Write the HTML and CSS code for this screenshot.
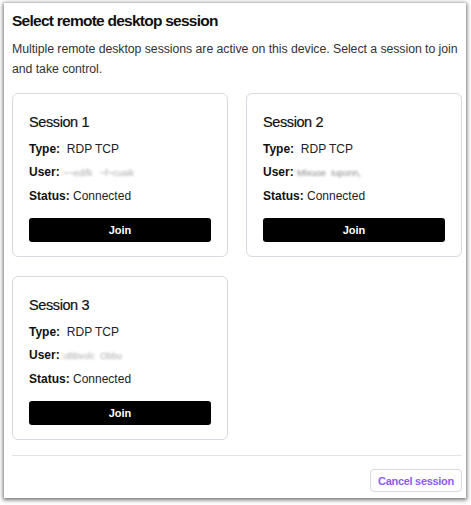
FILE: index.html
```html
<!DOCTYPE html>
<html>
<head>
<meta charset="utf-8">
<link rel="stylesheet" href="styles.css">
</head>
<body>
<div class="dialog">
  <h1 class="title">Select remote desktop session</h1>
  <p class="desc">Multiple remote desktop sessions are active on this device. Select a session to join and take control.</p>
  <div class="grid">
    <div class="card">
      <h2 class="card-title">Session 1</h2>
      <div class="row"><b>Type:</b>&nbsp; RDP TCP</div>
      <div class="row"><b>User:</b> <span class="blur">~~edifk &nbsp; ~f~cuaik</span></div>
      <div class="row"><b>Status:</b> Connected</div>
      <button class="join">Join</button>
    </div>
    <div class="card">
      <h2 class="card-title">Session 2</h2>
      <div class="row"><b>Type:</b>&nbsp; RDP TCP</div>
      <div class="row"><b>User:</b> <span class="blur dark">Mlxuoe &nbsp;Iuponn,</span></div>
      <div class="row"><b>Status:</b> Connected</div>
      <button class="join">Join</button>
    </div>
    <div class="card">
      <h2 class="card-title">Session 3</h2>
      <div class="row"><b>Type:</b>&nbsp; RDP TCP</div>
      <div class="row"><b>User:</b> <span class="blur">oBbvolc &nbsp;Obbu</span></div>
      <div class="row"><b>Status:</b> Connected</div>
      <button class="join">Join</button>
    </div>
  </div>
  <div class="footer">
    <button class="cancel">Cancel session</button>
  </div>
</div>
</body>
</html>
```
FILE: styles.css
```css
html, body {
  margin: 0;
  padding: 0;
  background: #ffffff;
}
body {
  font-family: "Liberation Sans", Arial, sans-serif;
  color: #111;
  width: 471px;
  height: 505px;
  overflow: hidden;
}
.dialog {
  box-sizing: border-box;
  margin: 3px 5px 0 4px;
  width: 462px;
  height: 495px;
  background: #fff;
  padding: 0 4px 0 8px;
  box-shadow: 0 1px 4px 1px rgba(0,0,0,0.55);
}
.title {
  margin: 0;
  padding-top: 8px;
  font-size: 15.5px;
  line-height: 20px;
  font-weight: 700;
  letter-spacing: -0.75px;
  color: #111;
}
.desc {
  margin: 9px 0 0;
  font-size: 12.3px;
  line-height: 19.5px;
  letter-spacing: -0.05px;
  color: #333;
}
.grid {
  margin-top: 14px;
  display: grid;
  grid-template-columns: 216px 216px;
  column-gap: 18px;
  row-gap: 19px;
}
.card {
  box-sizing: border-box;
  height: 164px;
  border: 1px solid #d6dbe1;
  border-radius: 6px;
  padding: 18px 16px 0;
}
.card-title {
  margin: 0;
  font-size: 14.5px;
  line-height: 20px;
  font-weight: 400;
  letter-spacing: -0.4px;
  color: #111;
  -webkit-text-stroke: 0.2px #111;
}
.row {
  font-size: 12px;
  line-height: 23px;
  color: #222;
}
.card-title + .row {
  margin-top: 6px;
}
.row b {
  font-weight: 700;
  color: #111;
}
.blur {
  color: #aaa;
  filter: blur(1.1px);
  font-size: 9px;
}
.blur.dark {
  color: #888;
}
.join {
  display: block;
  margin-top: 10px;
  width: 182px;
  height: 24px;
  border: none;
  border-radius: 3px;
  background: #000;
  color: #fff;
  font-family: inherit;
  font-size: 11px;
  font-weight: 700;
  padding: 0;
  cursor: pointer;
}
.footer {
  margin-top: 15px;
  border-top: 1px solid #e1e4e8;
  display: flex;
  justify-content: flex-end;
  padding-top: 13px;
}
.cancel {
  box-sizing: border-box;
  width: 92px;
  height: 23px;
  border: 1px solid #d6dbe1;
  border-radius: 4px;
  background: #fff;
  color: #8b5cf6;
  font-family: inherit;
  font-size: 11px;
  font-weight: 700;
  letter-spacing: -0.3px;
  padding: 0;
}
```
